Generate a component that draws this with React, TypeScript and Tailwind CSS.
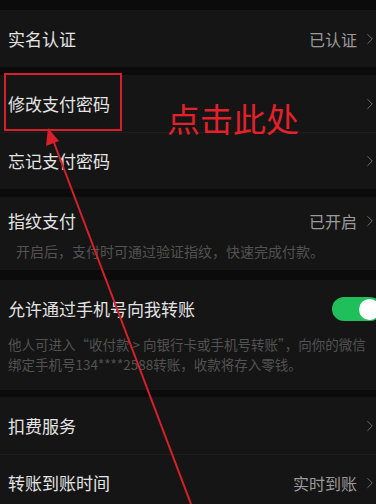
import { ChevronRight } from "lucide-react";

const FONT = {
  fontFamily: '"Noto Sans CJK SC", "Noto Sans", sans-serif',
};

function Chevron() {
  return (
    <ChevronRight
      className="-mr-[3px] ml-1 text-[#707070]"
      style={{ width: 18, height: 22 }}
      strokeWidth={1.3}
    />
  );
}

function Row({
  title,
  value,
  border = false,
}: {
  title: string;
  value?: string;
  border?: boolean;
}) {
  return (
    <div
      className={`flex h-[57px] items-center justify-between pl-2 ${
        border ? "border-t border-[#1d1d1d]" : ""
      }`}
    >
      <span className="text-[17px] text-[#e4e4e4]">{title}</span>
      <div className="flex items-center">
        {value && <span className="text-[16px] text-[#9b9b9b]">{value}</span>}
        <Chevron />
      </div>
    </div>
  );
}

export default function App() {
  return (
    <div
      className="relative h-[504px] w-[376px] overflow-hidden bg-[#0b0b0b]"
      style={FONT}
    >
      <div className="h-[10px]" />
      <div className="bg-[#151515]">
        <Row title="实名认证" value="已认证" />
      </div>
      <div className="h-[8px]" />
      <div className="bg-[#151515]">
        <Row title="修改支付密码" />
        <Row title="忘记支付密码" border />
      </div>
      <div className="h-[8px]" />

      {/* 指纹支付 */}
      <div className="h-[73px] bg-[#151515] pl-2">
        <div className="flex h-[44px] items-center justify-between pt-1">
          <span className="text-[17px] text-[#e4e4e4]">指纹支付</span>
          <div className="flex items-center">
            <span className="text-[16px] text-[#9b9b9b]">已开启</span>
            <Chevron />
          </div>
        </div>
        <p className="pl-2 text-[14px] leading-[20px] text-[#525252]">
          开启后，支付时可通过验证指纹，快速完成付款。
        </p>
      </div>
      <div className="h-[10px]" />

      {/* 手机号转账 */}
      <div className="h-[110px] bg-[#151515] pl-2">
        <div className="flex h-[58px] items-center justify-between">
          <span className="text-[17px] text-[#e4e4e4]">允许通过手机号向我转账</span>
          <div className="mr-[-6px] flex h-[24px] w-[50px] items-center justify-end rounded-full bg-[#1fbf5c] px-[2px]">
            <div className="h-[21px] w-[21px] rounded-full bg-white" />
          </div>
        </div>
        <p className="-mt-[4px] pr-1 text-[13.5px] leading-[20px] text-[#525252]">
          他人可进入“收付款 &gt; 向银行卡或手机号转账”，向你的微信绑定手机号134****2588转账，收款将存入零钱。
        </p>
      </div>
      <div className="h-[7px]" />

      <div className="bg-[#151515]">
        <Row title="扣费服务" />
        <Row title="转账到账时间" value="实时到账" border />
      </div>

      {/* annotations */}
      <div className="absolute left-[4px] top-[73px] h-[58px] w-[118px] border-2 border-[#d8202b]" />
      <span className="absolute left-[167px] top-[97px] text-[33px] leading-[42px] text-[#e3212b]">
        点击此处
      </span>
      <svg
        className="absolute left-0 top-0"
        width="376"
        height="504"
        viewBox="0 0 376 504"
      >
        <line x1="191" y1="504" x2="53" y2="140" stroke="#d8202b" strokeWidth="2" />
        <polygon points="48,128 46,146 59,141" fill="#d8202b" />
      </svg>
    </div>
  );
}
